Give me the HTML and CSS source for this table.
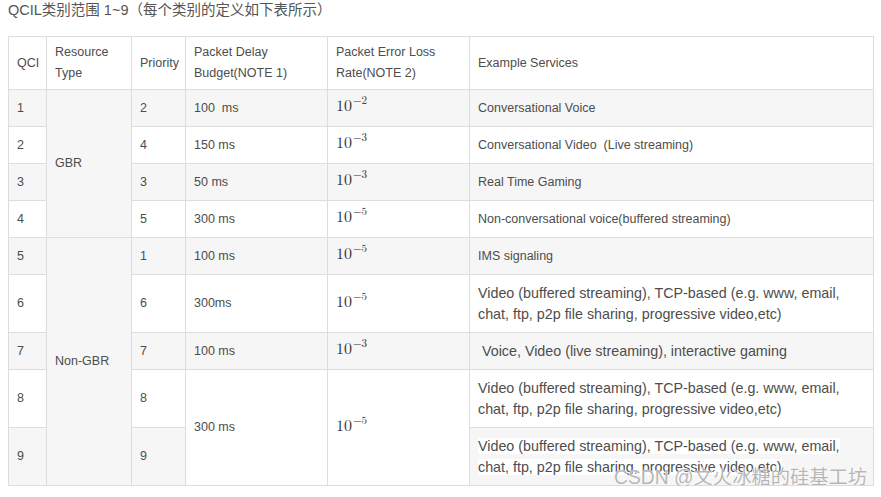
FILE: index.html
```html
<!DOCTYPE html>
<html lang="zh">
<head>
<meta charset="utf-8">
<title>QCI</title>
<link rel="stylesheet" href="styles.css">
</head>
<body>
<p class="title">QCIL类别范围 1~9（每个类别的定义如下表所示）</p>
<table class="qci">
  <colgroup>
    <col class="c1"><col class="c2"><col class="c3"><col class="c4"><col class="c5"><col class="c6">
  </colgroup>
  <tbody>
    <tr class="head">
      <td>QCI</td>
      <td>Resource<br>Type</td>
      <td>Priority</td>
      <td>Packet Delay<br>Budget(NOTE 1)</td>
      <td>Packet Error Loss<br>Rate(NOTE 2)</td>
      <td>Example Services</td>
    </tr>
    <tr class="odd short">
      <td>1</td>
      <td rowspan="4">GBR</td>
      <td>2</td>
      <td>100&nbsp; ms</td>
      <td><span class="m">10<sup>−2</sup></span></td>
      <td>Conversational Voice</td>
    </tr>
    <tr class="even short">
      <td>2</td>
      <td>4</td>
      <td>150 ms</td>
      <td><span class="m">10<sup>−3</sup></span></td>
      <td>Conversational Video &nbsp;(Live streaming)</td>
    </tr>
    <tr class="odd short">
      <td>3</td>
      <td>3</td>
      <td>50 ms</td>
      <td><span class="m">10<sup>−3</sup></span></td>
      <td>Real Time Gaming</td>
    </tr>
    <tr class="even short">
      <td>4</td>
      <td>5</td>
      <td>300 ms</td>
      <td><span class="m">10<sup>−5</sup></span></td>
      <td>Non-conversational voice(buffered streaming)</td>
    </tr>
    <tr class="odd short">
      <td>5</td>
      <td rowspan="5">Non-GBR</td>
      <td>1</td>
      <td>100 ms</td>
      <td><span class="m">10<sup>−5</sup></span></td>
      <td>IMS signaling</td>
    </tr>
    <tr class="even tall">
      <td>6</td>
      <td>6</td>
      <td>300ms</td>
      <td><span class="m">10<sup>−5</sup></span></td>
      <td class="big">Video (buffered streaming), TCP-based (e.g. www, email,<br>chat, ftp, p2p file sharing, progressive video,etc)</td>
    </tr>
    <tr class="odd short">
      <td>7</td>
      <td>7</td>
      <td>100 ms</td>
      <td><span class="m">10<sup>−3</sup></span></td>
      <td class="big">&nbsp;Voice, Video (live streaming), interactive gaming</td>
    </tr>
    <tr class="even tall">
      <td>8</td>
      <td>8</td>
      <td rowspan="2">300 ms</td>
      <td rowspan="2"><span class="m">10<sup>−5</sup></span></td>
      <td class="big">Video (buffered streaming), TCP-based (e.g. www, email,<br>chat, ftp, p2p file sharing, progressive video,etc)</td>
    </tr>
    <tr class="odd tall">
      <td>9</td>
      <td>9</td>
      <td class="big"><span class="hl">Video (buffered streaming), TCP-based (e.g. www, email,</span><br><span class="hl">chat, ftp, p2p file sharing, progressive video,etc)</span></td>
    </tr>
  </tbody>
</table>
<div class="watermark">CSDN @文火冰糖的硅基工坊</div>
</body>
</html>
```

FILE: styles.css
```css
html, body {
  background: #ffffff;
}
body {
  margin: 0;
  padding: 0 8px;
  position: relative;
  font-family: "Liberation Sans", Arial, "Noto Sans CJK SC", sans-serif;
  color: #4d4d4d;
}
.title {
  margin: 0;
  height: 36px;
  line-height: 20px;
  font-size: 14.5px;
  color: #555555;
  font-family: "Liberation Sans", Arial, "Noto Sans CJK SC", sans-serif;
}
.qci {
  border-collapse: collapse;
  width: 865px;
  table-layout: fixed;
  font-size: 12.5px;
  line-height: 21px;
}
.c1 { width: 38px; }
.c2 { width: 85px; }
.c3 { width: 54px; }
.c4 { width: 142px; }
.c5 { width: 142px; }
.c6 { width: 404px; }
.qci td {
  border: 1px solid #dddddd;
  padding: 0 8px;
  vertical-align: middle;
  text-align: left;
}
.head td { height: 52px; }
.short td { height: 36px; }
.tall td { height: 57px; }
.odd { background: #f6f6f6; }
.even { background: #ffffff; }
.head { background: #ffffff; }
.big {
  font-size: 14.3px;
  line-height: 21px;
}
.hl {
  background: #ffffff;
}
.m {
  font-family: "Latin Modern Math", "Liberation Serif", "DejaVu Serif", serif;
  font-size: 16px;
  color: #333333;
  position: relative;
  top: -1px;
}
.m sup {
  font-size: 11px;
  vertical-align: 0;
  position: relative;
  top: -7px;
  margin-left: 1px;
}
.watermark {
  position: absolute;
  left: 614px;
  top: 466px;
  font-size: 19.3px;
  line-height: 24px;
  color: rgba(150, 150, 150, 0.7);
  font-family: "Liberation Sans", "Noto Sans CJK SC", sans-serif;
  text-shadow: 0 0 1px #ffffff, 0 0 1px #ffffff;
  white-space: nowrap;
}
```
